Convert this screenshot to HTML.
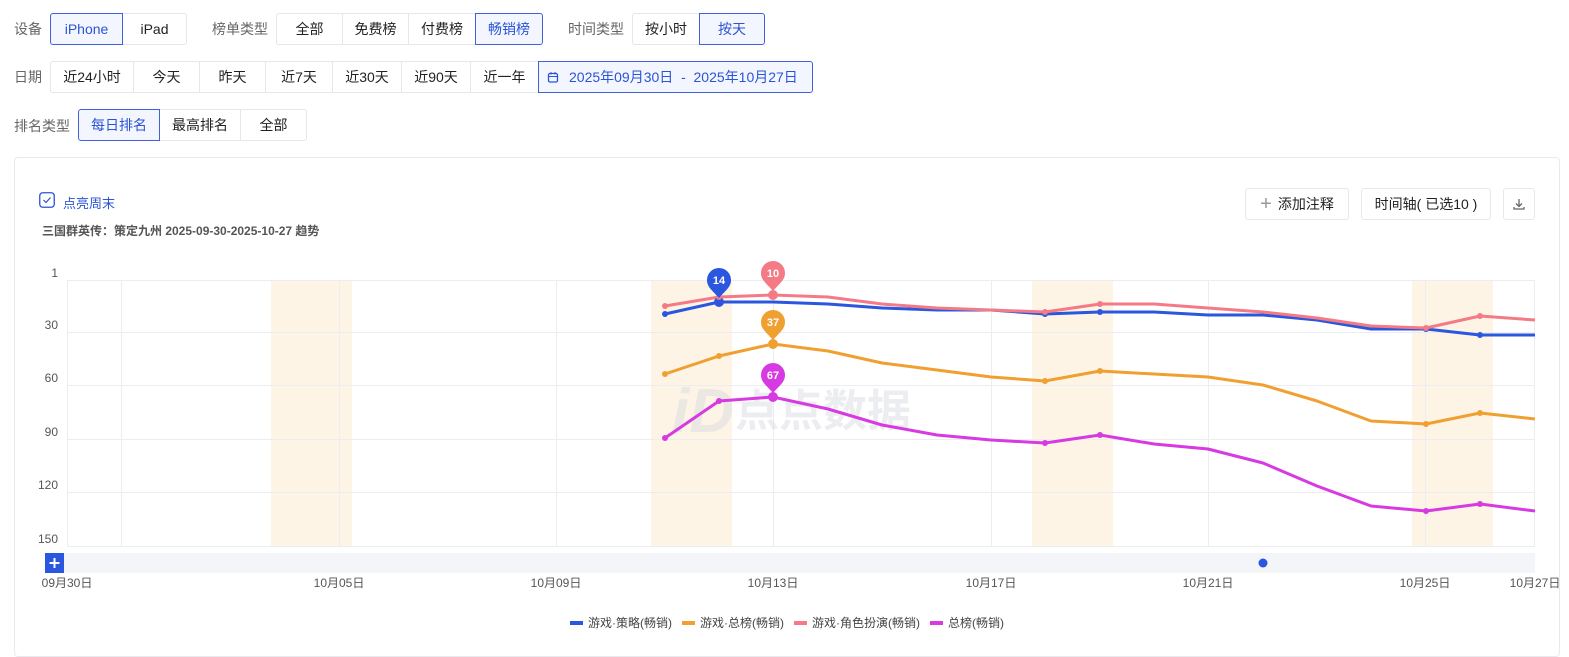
<!DOCTYPE html>
<html><head><meta charset="utf-8"><style>
*{box-sizing:border-box;margin:0;padding:0}
body{width:1569px;height:642px;background:#fff;font-family:"Liberation Sans","Noto Sans CJK SC",sans-serif;font-size:14px;color:#333;position:relative;overflow:hidden}
.lb{position:absolute;color:#666;font-size:14px}
.grp{position:absolute;display:flex;height:32px}
.grp div{border:1px solid #e4e6eb;margin-left:-1px;display:flex;align-items:center;justify-content:center;font-size:14px;color:#222;background:#fff;white-space:nowrap}
.grp div:first-child{border-radius:3px 0 0 3px;margin-left:0}
.grp div:last-child{border-radius:0 3px 3px 0}
.grp div.on{border-color:#3f63d6;color:#2b54d4;background:#f3f6fe;position:relative;z-index:1}
.btn{position:absolute;border:1px solid #e6e8ec;border-radius:3px;height:32px;display:flex;align-items:center;justify-content:center;font-size:14px;color:#222;background:#fff}
</style></head><body>
<span class="lb" style="left:14px;top:19px">设备</span>
<div class="grp" style="left:50px;top:13px"><div class="on" style="width:73px">iPhone</div><div style="width:65px">iPad</div></div>
<span class="lb" style="left:212px;top:19px">榜单类型</span>
<div class="grp" style="left:276px;top:13px"><div style="width:67px">全部</div><div style="width:67px">免费榜</div><div style="width:68px">付费榜</div><div class="on" style="width:68px">畅销榜</div></div>
<span class="lb" style="left:568px;top:19px">时间类型</span>
<div class="grp" style="left:632px;top:13px"><div style="width:68px">按小时</div><div class="on" style="width:66px">按天</div></div>

<span class="lb" style="left:14px;top:67px">日期</span>
<div class="grp" style="left:50px;top:61px"><div style="width:84px">近24小时</div><div style="width:67px">今天</div><div style="width:67px">昨天</div><div style="width:68px">近7天</div><div style="width:70px">近30天</div><div style="width:70px">近90天</div><div style="width:69px">近一年</div><div class="on" style="width:275px;justify-content:flex-start;padding-left:8px"><svg width="12" height="12" viewBox="0 0 12 12" style="margin-right:10px"><rect x="1.5" y="2.5" width="9" height="8.5" rx="1.5" fill="none" stroke="#2b54d4" stroke-width="1.3"/><line x1="2" y1="5.5" x2="10" y2="5.5" stroke="#2b54d4"/><line x1="4" y1="1" x2="4" y2="3.5" stroke="#2b54d4"/><line x1="8" y1="1" x2="8" y2="3.5" stroke="#2b54d4"/></svg>2025年09月30日 &nbsp;- &nbsp;2025年10月27日</div></div>

<span class="lb" style="left:14px;top:116px">排名类型</span>
<div class="grp" style="left:78px;top:109px"><div class="on" style="width:82px">每日排名</div><div style="width:82px">最高排名</div><div style="width:67px">全部</div></div>

<div style="position:absolute;left:14px;top:157px;width:1546px;height:500px;border:1px solid #e8eaee;border-radius:4px"></div>
<svg style="position:absolute;left:39px;top:192px" width="16" height="16" viewBox="0 0 16 16"><rect x="0.75" y="0.75" width="14.5" height="14.5" rx="3" fill="none" stroke="#2b54d4" stroke-width="1.3"/><path d="M4.5 8l2.5 2.5 4.5-5" fill="none" stroke="#2b54d4" stroke-width="1.2"/></svg>
<span style="position:absolute;left:63px;top:193px;font-size:13px;color:#2b54d4">点亮周末</span>
<span style="position:absolute;left:42px;top:222px;font-size:12px;color:#555;font-weight:bold">三国群英传：策定九州 2025-09-30-2025-10-27 趋势</span>
<div class="btn" style="left:1245px;top:188px;width:104px;gap:6px"><span style="color:#999;font-size:20px;font-weight:300;line-height:1">+</span>添加注释</div>
<div class="btn" style="left:1361px;top:188px;width:130px">时间轴( 已选10 )</div>
<div class="btn" style="left:1503px;top:188px;width:32px"><svg width="14" height="14" viewBox="0 0 14 14"><path d="M7 2v7M4 6.5l3 3 3-3M2 10v2h10v-2" fill="none" stroke="#666" stroke-width="1.3"/></svg></div>

<svg style="position:absolute;left:0;top:0" width="1569" height="642">
<g fill="#fdf4e6"><rect x="271" y="280" width="81" height="266"/><rect x="651" y="280" width="81" height="266"/><rect x="1032" y="280" width="81" height="266"/><rect x="1412" y="280" width="81" height="266"/></g>
<g stroke="#ebedf0" stroke-width="1"><line x1="67" y1="280.5" x2="1535" y2="280.5"/><line x1="67" y1="332.5" x2="1535" y2="332.5"/><line x1="67" y1="385.5" x2="1535" y2="385.5"/><line x1="67" y1="439.5" x2="1535" y2="439.5"/><line x1="67" y1="492.5" x2="1535" y2="492.5"/><line x1="67" y1="546.5" x2="1535" y2="546.5"/>
<line x1="67.5" y1="280" x2="67.5" y2="546"/><line x1="121.5" y1="280" x2="121.5" y2="546"/><line x1="339.5" y1="280" x2="339.5" y2="546"/><line x1="556.5" y1="280" x2="556.5" y2="546"/><line x1="773.5" y1="280" x2="773.5" y2="546"/><line x1="991.5" y1="280" x2="991.5" y2="546"/><line x1="1208.5" y1="280" x2="1208.5" y2="546"/><line x1="1425.5" y1="280" x2="1425.5" y2="546"/><line x1="1534.5" y1="280" x2="1534.5" y2="546"/></g>
<g font-size="12" fill="#555" text-anchor="end" font-family="Liberation Sans"><text x="58" y="277">1</text><text x="58" y="329">30</text><text x="58" y="382">60</text><text x="58" y="436">90</text><text x="58" y="489">120</text><text x="58" y="543">150</text></g>
<text x="735" y="426" font-size="44" font-weight="bold" fill="#d6d8de" opacity="0.45" font-family="Noto Sans CJK SC">点点数据</text>
<text x="672" y="432" font-size="62" font-weight="bold" font-style="italic" fill="#d6d8de" opacity="0.45">iD</text>
<g fill="none" stroke-width="3" stroke-linejoin="round">
<polyline stroke="#f0a030" points="665,374 719,356 773,344 828,351 882,363 937,370 991,377 1045,381 1100,371 1154,374 1208,377 1263,385 1317,401 1371,421 1426,424 1480,413 1535,419"/>
<polyline stroke="#d63ae0" points="665,438 719,401 773,397 828,409 882,425 937,435 991,440 1045,443 1100,435 1154,444 1208,449 1263,463 1317,486 1371,506 1426,511 1480,504 1535,511"/>
<polyline stroke="#2b56de" points="665,314 719,302 773,302 828,304 882,308 937,310 991,310 1045,314 1100,312 1154,312 1208,315 1263,315 1317,320 1371,329 1426,329 1480,335 1535,335"/>
<polyline stroke="#f47a86" points="665,306 719,297 773,295 828,297 882,304 937,308 991,310 1045,312 1100,304 1154,304 1208,308 1263,312 1317,318 1371,326 1426,328 1480,316 1535,320"/>
</g>
<g fill="#f0a030"><circle cx="665" cy="374" r="3"/><circle cx="719" cy="356" r="3"/><circle cx="773" cy="344" r="5"/><circle cx="1045" cy="381" r="3"/><circle cx="1100" cy="371" r="3"/><circle cx="1426" cy="424" r="3"/><circle cx="1480" cy="413" r="3"/></g>
<g fill="#d63ae0"><circle cx="665" cy="438" r="3"/><circle cx="719" cy="401" r="3"/><circle cx="773" cy="397" r="5"/><circle cx="1045" cy="443" r="3"/><circle cx="1100" cy="435" r="3"/><circle cx="1426" cy="511" r="3"/><circle cx="1480" cy="504" r="3"/></g>
<g fill="#2b56de"><circle cx="665" cy="314" r="3"/><circle cx="719" cy="302" r="5"/><circle cx="1045" cy="314" r="3"/><circle cx="1100" cy="312" r="3"/><circle cx="1426" cy="329" r="3"/><circle cx="1480" cy="335" r="3"/></g>
<g fill="#f47a86"><circle cx="665" cy="306" r="3"/><circle cx="719" cy="297" r="3"/><circle cx="773" cy="295" r="5"/><circle cx="1045" cy="312" r="3"/><circle cx="1100" cy="304" r="3"/><circle cx="1426" cy="328" r="3"/><circle cx="1480" cy="316" r="3"/></g>
<g font-size="11" font-weight="bold" fill="#fff" text-anchor="middle">
<path d="M719 298 C712 290 707 287 707 280 A12 12 0 0 1 731 280 C731 287 726 290 719 298Z" fill="#2b56de"/><text x="719" y="284">14</text>
<path d="M773 291 C766 283 761 280 761 273 A12 12 0 0 1 785 273 C785 280 780 283 773 291Z" fill="#f47a86"/><text x="773" y="277">10</text>
<path d="M773 340 C766 332 761 329 761 322 A12 12 0 0 1 785 322 C785 329 780 332 773 340Z" fill="#f0a030"/><text x="773" y="326">37</text>
<path d="M773 393 C766 385 761 382 761 375 A12 12 0 0 1 785 375 C785 382 780 385 773 393Z" fill="#d63ae0"/><text x="773" y="379">67</text>
</g>
<rect x="45" y="553" width="1490" height="20" fill="#f3f5f8"/>
<rect x="45" y="553" width="19" height="20" fill="#2b56de"/>
<path d="M54.5 558v10M49.5 563h10" stroke="#fff" stroke-width="2"/>
<circle cx="1263" cy="563" r="4.5" fill="#2b56de"/>
<g font-size="12" fill="#555" text-anchor="middle"><text x="67" y="587">09月30日</text><text x="339" y="587">10月05日</text><text x="556" y="587">10月09日</text><text x="773" y="587">10月13日</text><text x="991" y="587">10月17日</text><text x="1208" y="587">10月21日</text><text x="1425" y="587">10月25日</text><text x="1535" y="587">10月27日</text></g>
<g font-size="12" fill="#444">
<rect x="570" y="621" width="13" height="4" fill="#2b56de"/><text x="588" y="627">游戏·策略(畅销)</text>
<rect x="682" y="621" width="13" height="4" fill="#f0a030"/><text x="700" y="627">游戏·总榜(畅销)</text>
<rect x="794" y="621" width="13" height="4" fill="#f47a86"/><text x="812" y="627">游戏·角色扮演(畅销)</text>
<rect x="930" y="621" width="13" height="4" fill="#d63ae0"/><text x="948" y="627">总榜(畅销)</text>
</g>
</svg>
</body></html>
